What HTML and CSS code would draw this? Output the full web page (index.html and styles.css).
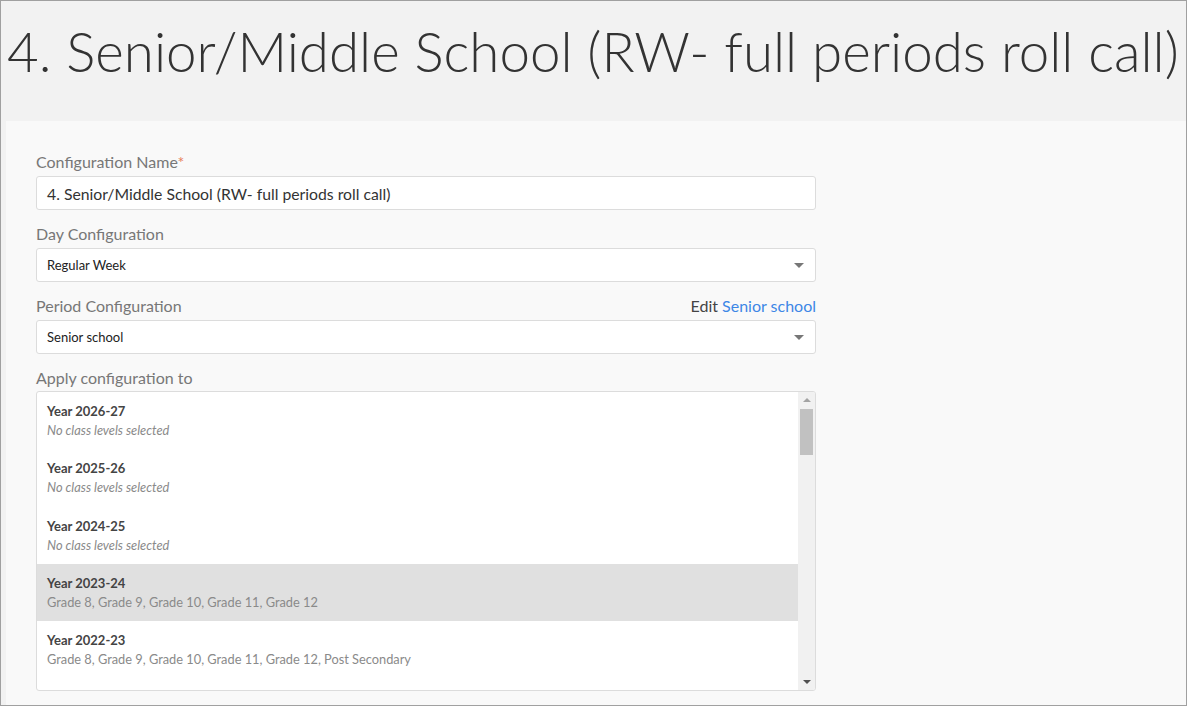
FILE: index.html
```html
<!DOCTYPE html>
<html>
<head>
<meta charset="utf-8">
<link rel="stylesheet" href="styles.css">
</head>
<body>
<div class="frame">
  <header class="head">
    <h1 class="title">4. Senior/Middle School (RW- full periods roll call)</h1>
  </header>
  <main class="panel">
    <div class="field">
      <div class="label-row"><span class="label">Configuration Name<span class="req">*</span></span></div>
      <div class="input">4. Senior/Middle School (RW- full periods roll call)</div>
    </div>
    <div class="field">
      <div class="label-row"><span class="label">Day Configuration</span></div>
      <div class="select"><span>Regular Week</span><span class="caret"></span></div>
    </div>
    <div class="field">
      <div class="label-row"><span class="label">Period Configuration</span><span class="edit">Edit <a class="link">Senior school</a></span></div>
      <div class="select"><span>Senior school</span><span class="caret"></span></div>
    </div>
    <div class="field">
      <div class="label-row"><span class="label">Apply configuration to</span></div>
      <div class="list">
        <div class="items">
          <div class="item"><div class="item-title">Year 2026-27</div><div class="item-sub empty">No class levels selected</div></div>
          <div class="item"><div class="item-title">Year 2025-26</div><div class="item-sub empty">No class levels selected</div></div>
          <div class="item"><div class="item-title">Year 2024-25</div><div class="item-sub empty">No class levels selected</div></div>
          <div class="item selected"><div class="item-title">Year 2023-24</div><div class="item-sub">Grade 8, Grade 9, Grade 10, Grade 11, Grade 12</div></div>
          <div class="item"><div class="item-title">Year 2022-23</div><div class="item-sub">Grade 8, Grade 9, Grade 10, Grade 11, Grade 12, Post Secondary</div></div>
        </div>
        <div class="scrollbar">
          <span class="arrow up"></span>
          <div class="track"><div class="thumb"></div></div>
          <span class="arrow down"></span>
        </div>
      </div>
    </div>
  </main>
</div>
</body>
</html>
```

FILE: styles.css
```css
* { box-sizing: border-box; }
html, body { margin: 0; padding: 0; }
body {
  font-family: Lato, "Liberation Sans", sans-serif;
  color: #333;
  background: #f2f2f2;
}
.frame {
  width: 1187px;
  height: 706px;
  border: 1px solid #a0a0a0;
  background: #f2f2f2;
  display: flex;
  flex-direction: column;
  overflow: hidden;
}
.head {
  height: 120px;
  flex: none;
  padding: 15px 0 0 6px;
}
.title {
  margin: 0;
  font-weight: 300;
  font-size: 54.7px;
  line-height: 70px;
  color: #333;
  white-space: nowrap;
}
.panel {
  flex: 1;
  margin-left: 5px;
  background: #f9f9f9;
  padding: 31px 0 0 30px;
}
.field {
  width: 780px;
  margin-bottom: 14px;
}
.label-row {
  display: flex;
  justify-content: space-between;
  align-items: baseline;
  font-size: 16px;
  line-height: 20px;
  margin-bottom: 4px;
}
.label { color: #777; }
.req { color: #e8805a; }
.edit { color: #444; }
.link { color: #3d87e6; cursor: pointer; }
.input, .select {
  height: 34px;
  background: #fff;
  border: 1px solid #dcdcdc;
  border-radius: 3px;
  padding: 0 10px;
  display: flex;
  align-items: center;
}
.input { font-size: 15.75px; color: #333; }
.select {
  font-size: 13px;
  color: #222;
  justify-content: space-between;
  padding-right: 11px;
}
.caret {
  width: 0;
  height: 0;
  border-left: 5px solid transparent;
  border-right: 5px solid transparent;
  border-top: 5px solid #777;
}
.list {
  height: 300px;
  margin-top: -1px;
  background: #fff;
  border: 1px solid #dcdcdc;
  border-radius: 3px;
  display: flex;
  overflow: hidden;
}
.items {
  flex: 1;
  overflow: hidden;
}
.item {
  height: 57.25px;
  padding: 10px 10px 0;
}
.item.selected { background: #e0e0e0; }
.item-title {
  font-size: 13px;
  font-weight: 700;
  line-height: 18px;
  color: #444;
}
.item-sub {
  margin-top: 1px;
  font-size: 12.8px;
  line-height: 19px;
  color: #8a8a8a;
}
.item-sub.empty { font-style: italic; }
.scrollbar {
  width: 17px;
  background: #f1f1f1;
  display: flex;
  flex-direction: column;
  align-items: center;
}
.arrow {
  width: 0;
  height: 0;
  border-left: 4px solid transparent;
  border-right: 4px solid transparent;
  margin: 6px 0;
}
.arrow.up { border-bottom: 4px solid #a3a3a3; }
.arrow.down { border-top: 4px solid #505050; }
.track {
  flex: 1;
  width: 100%;
  padding: 1px 2px;
}
.thumb {
  height: 46px;
  background: #c1c1c1;
}
```
